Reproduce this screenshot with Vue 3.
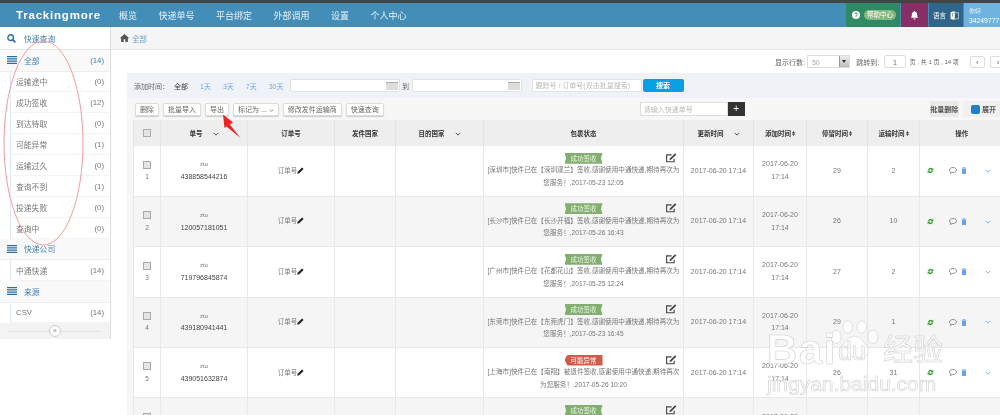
<script setup>
const navItems = ['概览', '快递单号', '平台绑定', '外部调用', '设置', '个人中心']

const statusItems = [
  { name: '运输途中', count: 0 },
  { name: '成功签收', count: 12 },
  { name: '到达待取', count: 0 },
  { name: '可能异常', count: 1 },
  { name: '运输过久', count: 0 },
  { name: '查询不到', count: 1 },
  { name: '投递失败', count: 0 },
  { name: '查询中', count: 0 }
]

const dateLinks = ['1天', '3天', '7天', '30天']

const toolButtons = ['删除', '批量导入', '导出', '标记为 ...', '修改发件运输商', '快速查询']

const columns = [
  { label: '单号', sort: 'down' },
  { label: '订单号' },
  { label: '发件国家' },
  { label: '目的国家', sort: 'down' },
  { label: '包裹状态' },
  { label: '更新时间', sort: 'down' },
  { label: '添加时间', sort: 'both' },
  { label: '停留时间', sort: 'both' },
  { label: '运输时间', sort: 'both' },
  { label: '操作' }
]

const signed = (city, site, date) => `[${city}]快件已在【${site}】签收,感谢使用中通快递,期待再次为您服务！,${date}`

const rows = [
  { id: 1, no: '438858544216', tag: '成功签收', info: signed('深圳市', '深圳观兰', '2017-05-23 12:05'), stay: 29, ship: 2 },
  { id: 2, no: '120057181051', tag: '成功签收', info: signed('长沙市', '长沙开福', '2017-05-26 16:43'), stay: 26, ship: 10 },
  { id: 3, no: '719796845874', tag: '成功签收', info: signed('广州市', '花都花山', '2017-05-25 12:24'), stay: 27, ship: 2 },
  { id: 4, no: '439180941441', tag: '成功签收', info: signed('东莞市', '东莞虎门', '2017-05-23 16:45'), stay: 29, ship: 1 },
  { id: 5, no: '439051632874', tag: '可能异常', danger: true, info: '[上海市]快件已在【南翔】被退件签收,感谢使用中通快递,期待再次为您服务！,2017-05-26 10:20', stay: 26, ship: 31 },
  { id: 6, no: '439051632875', tag: '成功签收', info: signed('上海市', '南翔', '2017-05-26 10:20'), stay: 26, ship: 3 }
]
</script>

<template>
  <div class="page">
    <header class="navbar">
      <span class="brand">Trackingmore</span>
      <nav class="nav-list">
        <span v-for="item in navItems" :key="item">{{ item }}</span>
      </nav>
      <div class="nav-right">
        <div class="nav-box help">
          <svg class="help-icon" viewBox="0 0 16 16"><circle cx="8" cy="8" r="8" fill="#fff"/><path d="M5.6 6.2a2.4 2.4 0 1 1 3.6 2.1c-.8.5-1.2.9-1.2 1.7" fill="none" stroke="#2e8965" stroke-width="2"/><rect x="7" y="11" width="2" height="2" fill="#2e8965"/></svg>
          <span class="help-pill">帮助中心</span>
        </div>
        <div class="nav-box bell">
          <svg viewBox="0 0 16 16" width="9" height="9"><path d="M8 0a1.4 1.4 0 0 1 1.3 1.5C11.700 2.200 12.800 4 12.800 6.500c0 3 .7 4.400 2 5.700H1.200c1.300-1.300 2-2.700 2-5.700C3.200 4 4.300 2.200 6.700 1.500A1.400 1.400 0 0 1 8 0zM6 13.400h4a2 2 0 0 1-4 0z" fill="#fff"/></svg>
        </div>
        <div class="nav-box lang">
          <span>语言</span>
          <svg viewBox="0 0 16 16" width="9" height="9"><path d="M1 2l7-2v16l-7-2z" fill="#fff"/><path d="M8 3h7v11H8z" fill="none" stroke="#fff"/><path d="M10 11l2-5 2 5M3 5h3M4.500 5v5" fill="none" stroke="#2e6589"/></svg>
        </div>
        <div class="nav-box user">
          <span class="user-hi">你好</span>
          <span>34249777</span>
        </div>
      </div>
    </header>

    <div class="body">
      <aside class="sidebar">
        <div class="side-head search-row">
          <svg viewBox="0 0 16 16" width="9" height="9"><circle cx="6.500" cy="6.500" r="5" fill="none" stroke="#2b6ea3" stroke-width="2.600"/><path d="M10.500 10.500L15 15" stroke="#2b6ea3" stroke-width="3"/></svg>
          <span>快速查询</span>
        </div>
        <div class="side-head">
          <svg class="list-icon" viewBox="0 0 10 8"><path d="M0 .6h10M0 2.900h10M0 5.100h10M0 7.400h10" stroke="#2b6ea3" stroke-width="1.200"/></svg>
          <span>全部</span>
          <em>(14)</em>
        </div>
        <div v-for="item in statusItems" :key="item.name" class="side-item">
          <span>{{ item.name }}</span>
          <em>({{ item.count }})</em>
        </div>
        <div class="side-head">
          <svg class="list-icon" viewBox="0 0 10 8"><path d="M0 .6h10M0 2.900h10M0 5.100h10M0 7.400h10" stroke="#2b6ea3" stroke-width="1.200"/></svg>
          <span>快递公司</span>
        </div>
        <div class="side-item">
          <span>中通快递</span>
          <em>(14)</em>
        </div>
        <div class="side-head">
          <svg class="list-icon" viewBox="0 0 10 8"><path d="M0 .6h10M0 2.900h10M0 5.100h10M0 7.400h10" stroke="#2b6ea3" stroke-width="1.200"/></svg>
          <span>来源</span>
        </div>
        <div class="side-item">
          <span>CSV</span>
          <em>(14)</em>
        </div>
        <div class="side-collapse">
          <span class="collapse-btn">«</span>
        </div>
      </aside>

      <main class="main">
        <div class="breadcrumb">
          <svg viewBox="0 0 16 14" width="9" height="8"><path d="M8 0l8 7-1 1-1-.8V14H9.500V9h-3v5H2V7.200L1 8 0 7z" fill="#555"/></svg>
          <span>全部</span>
        </div>

        <div class="pager">
          <span>显示行数:</span>
          <span class="select">50<i class="select-arrow"></i></span>
          <span class="jump">跳转到:</span>
          <span class="page-input">1</span>
          <span class="page-info">页 , 共 1 页 , 14 项</span>
          <span class="page-btn">‹</span>
          <span class="page-btn">›</span>
        </div>

        <section class="panel">
          <div class="filter">
            <span class="filter-label">添加时间：</span>
            <span class="date-all">全部</span>
            <a v-for="link in dateLinks" :key="link" class="date-link">{{ link }}</a>
            <span class="date-input"><i class="cal"></i></span>
            <span class="date-to">到</span>
            <span class="date-input"><i class="cal"></i></span>
            <span class="search-input">跟踪号 / 订单号(双击批量搜索)</span>
            <span class="search-btn">搜索</span>
          </div>

          <div class="toolbar">
            <button v-for="btn in toolButtons" :key="btn" class="tool-btn">
              {{ btn }}
              <svg v-if="btn.startsWith('标记为')" class="btn-caret" viewBox="0 0 8 5"><path d="M1 1l3 3 3-3" fill="none" stroke="#666" stroke-width="1.200"/></svg>
            </button>
            <div class="quick-add">
              <span class="quick-input">请输入快递单号</span>
              <span class="quick-plus">+</span>
            </div>
            <button class="bulk-btn">批量删除</button>
            <button class="bulk-btn expand"><i class="expand-icon"></i>展开</button>
          </div>

          <table class="grid">
            <colgroup>
              <col style="width: 27px" />
              <col style="width: 87px" />
              <col style="width: 87px" />
              <col style="width: 61px" />
              <col style="width: 88px" />
              <col style="width: 200px" />
              <col style="width: 70px" />
              <col style="width: 53px" />
              <col style="width: 61px" />
              <col style="width: 52px" />
              <col style="width: 84px" />
            </colgroup>
            <thead>
              <tr>
                <th><i class="check"></i></th>
                <th v-for="col in columns" :key="col.label">
                  <span>{{ col.label }}</span>
                  <svg v-if="col.sort === 'down'" class="sort-down" viewBox="0 0 8 5"><path d="M1 1l3 3 3-3" fill="none" stroke="#444" stroke-width="1.200"/></svg>
                  <svg v-if="col.sort === 'both'" class="sort-both" viewBox="0 0 4 7"><path d="M2 0l2 3H0zM2 7L0 4h4z" fill="#333"/></svg>
                </th>
              </tr>
            </thead>
            <tbody>
              <tr v-for="row in rows" :key="row.id">
                <td>
                  <i class="check"></i>
                  <div class="row-index">{{ row.id }}</div>
                </td>
                <td>
                  <div class="carrier">zto</div>
                  <div class="track-no">{{ row.no }}</div>
                </td>
                <td>
                  <span class="order-no">订单号</span>
                  <svg class="pencil" viewBox="0 0 16 16"><path d="M11.500 1l3.500 3.500L5 14.500 0.500 15.500 1.500 11z" fill="#222"/></svg>
                </td>
                <td></td>
                <td></td>
                <td class="status-cell">
                  <div class="tag-line">
                    <span class="tag" :class="{ danger: row.danger }">{{ row.tag }}</span>
                    <svg class="edit-icon" viewBox="0 0 18 16"><path d="M14 9v5H2V3h8" fill="none" stroke="#444" stroke-width="1.800"/><path d="M15.500 0.500l2 2L9.500 10.500l-3 1 1-3z" fill="#444"/></svg>
                  </div>
                  <div class="status-text">{{ row.info }}</div>
                </td>
                <td>2017-06-20 17:14</td>
                <td>2017-06-20 17:14</td>
                <td>{{ row.stay }}</td>
                <td>{{ row.ship }}</td>
                <td>
                  <div class="ops">
                    <svg class="op-refresh" viewBox="0 0 16 16"><path d="M2.500 7A5.600 5.600 0 0 1 12.500 4L14.500 2v6H8.500l2-2A3 3 0 0 0 5.500 7zM13.500 9a5.600 5.600 0 0 1-10 3l-2 2V8h6l-2 2a3 3 0 0 0 5 -1z" fill="#2f9e2f"/></svg>
                    <svg class="op-comment" viewBox="0 0 16 14"><path d="M8 1c3.900 0 7 2.200 7 5s-3.100 5-7 5l-1.500-.1L3 13l.6-3C2 9 1 7.600 1 6c0-2.800 3.100-5 7-5z" fill="none" stroke="#666" stroke-width="1.400"/></svg>
                    <svg class="op-trash" viewBox="0 0 12 14"><path d="M1 2.500h10M4.500 2.500V1h3v1.500" fill="none" stroke="#6aa0e6" stroke-width="1.400"/><path d="M2 4h8v10H2z" fill="#6aa0e6"/></svg>
                    <svg class="op-more" viewBox="0 0 8 5"><path d="M1 1l3 3 3-3" fill="none" stroke="#7aa9e8" stroke-width="1.200"/></svg>
                  </div>
                </td>
              </tr>
            </tbody>
          </table>
        </section>
      </main>
    </div>

    <!-- hand drawn marks on top of the screenshot -->
    <svg class="marks" viewBox="0 0 1000 415">
      <ellipse cx="43.500" cy="143" rx="39.500" ry="102" fill="none" stroke="#f49a9a" stroke-width="1" />
      <path d="M223 114.500L233 122.500 229.800 124.500 240.500 138 226.500 126.500 224.500 128z" fill="#ee2222" />
    </svg>

    <div class="watermark">
      <svg class="paw" viewBox="0 0 90 64">
        <g fill="#fff" fill-opacity=".75" stroke="#cfcfcf">
          <ellipse cx="15" cy="26" rx="8" ry="11" />
          <ellipse cx="34" cy="10" rx="8" ry="10" />
          <ellipse cx="57" cy="10" rx="8" ry="10" />
          <ellipse cx="75" cy="26" rx="8" ry="11" />
          <path d="M45 25c10 0 13 8 19 14 7 7 4 21-8 21-4 0-7-2-11-2s-7 2-11 2c-12 0-15-14-8-21 6-6 9-14 19-14z" />
        </g>
      </svg>
      <span class="wm-bai">Bai</span>
      <span class="wm-du">du</span>
      <span class="wm-cn">经验</span>
      <span class="wm-url">jingyan.baidu.com</span>
    </div>
  </div>
</template>

<style>
html,
body {
  margin: 0;
  overflow: hidden;
}
</style>

<style scoped>
.page {
  position: relative;
  width: 1000px;
  height: 415px;
  overflow: hidden;
  display: flex;
  flex-direction: column;
  background: #fff;
  border-top: 3px solid #444;
  box-sizing: border-box;
  font-family: "Liberation Sans", "Noto Sans CJK SC", sans-serif;
  font-size: 7px;
  color: #666;
  filter: blur(0.3px);
}

/* navbar */
.navbar {
  flex: 0 0 24px;
  display: flex;
  align-items: center;
  background: #438eb9;
  color: #fff;
  padding-left: 16px;
}

.brand {
  font-size: 11.5px;
  font-weight: 700;
  letter-spacing: 0.8px;
  margin-right: 18px;
}

.nav-list {
  display: flex;
  gap: 21.5px;
  font-size: 9px;
  color: #e6f0f6;
}

.nav-right {
  margin-left: auto;
  display: flex;
  align-self: stretch;
  gap: 1px;
}

.nav-box {
  display: flex;
  align-items: center;
}

.help {
  width: 54px;
  background: #2e8965;
  padding-left: 6px;
  gap: 4px;
  box-sizing: border-box;
}

.help-icon {
  width: 8px;
  height: 8px;
}

.help-pill {
  background: #87b87f;
  border-radius: 6px;
  padding: 1px 3px;
  font-size: 6.5px;
  line-height: 8px;
}

.bell {
  width: 27px;
  justify-content: center;
  background: #892e65;
}

.lang {
  width: 34px;
  background: #2e6589;
  padding-left: 4px;
  gap: 4px;
  box-sizing: border-box;
  font-size: 6.5px;
}

.user {
  width: 36px;
  background: #6fb3e0;
  padding-left: 5px;
  box-sizing: border-box;
  flex-direction: column;
  align-items: flex-start;
  justify-content: center;
  gap: 2px;
  font-size: 6.8px;
  white-space: nowrap;
}

.user-hi {
  font-size: 6px;
  opacity: 0.85;
}

/* sidebar */
.body {
  flex: 1;
  display: flex;
  min-height: 0;
}

.sidebar {
  flex: 0 0 110px;
  align-self: flex-start;
  background: #fff;
  border-right: 1px solid #ddd;
  font-size: 7.8px;
}

.side-head {
  height: 21.5px;
  display: flex;
  align-items: center;
  gap: 7px;
  padding: 0 6px 0 7px;
  background: #f9f9f9;
  border-bottom: 1px solid #eee;
  box-sizing: border-box;
  color: #3f7fb5;
}

.search-row {
  height: 23px;
  background: #fff;
  gap: 8px;
  border-bottom-color: #e5e5e5;
}

.list-icon {
  width: 10px;
  height: 8px;
  flex-shrink: 0;
}

.side-head em {
  margin-left: auto;
  font-style: normal;
}

.side-item {
  height: 20.9px;
  margin-left: 10px;
  padding: 1px 6px 0 5px;
  display: flex;
  align-items: center;
  justify-content: space-between;
  border-left: 1px solid #dfe9f5;
  border-bottom: 1px solid #f4f4f4;
  box-sizing: border-box;
  color: #777;
}

.side-item em {
  font-style: normal;
}

.side-collapse {
  height: 16px;
  display: flex;
  align-items: center;
  justify-content: center;
  background: #f3f3f3;
  background-image: linear-gradient(#e2e2e2, #e2e2e2);
  background-size: 92px 1px;
  background-position: center;
  background-repeat: no-repeat;
}

.collapse-btn {
  width: 10px;
  height: 10px;
  line-height: 9px;
  text-align: center;
  border: 1px solid #ccc;
  border-radius: 50%;
  background: #fff;
  color: #888;
  font-size: 7px;
}

/* main */
.main {
  width: 889px;
  flex-shrink: 0;
}

.breadcrumb {
  height: 23px;
  display: flex;
  align-items: center;
  gap: 3px;
  padding-left: 9px;
  background: #f5f5f5;
  border-bottom: 1px solid #e5e5e5;
  box-sizing: border-box;
  font-size: 7.5px;
  color: #6d9ec4;
}

.pager {
  height: 23px;
  width: 900px;
  display: flex;
  align-items: center;
  padding-left: 664px;
  box-sizing: border-box;
  font-size: 7px;
  color: #666;
  white-space: nowrap;
}

.select {
  width: 44px;
  height: 13px;
  margin-left: 2px;
  padding-left: 4px;
  position: relative;
  line-height: 13px;
  border: 1px solid #ddd;
  box-sizing: border-box;
  color: #aaa;
}

.select-arrow {
  position: absolute;
  right: 0;
  top: 0;
  width: 9px;
  height: 11px;
  background: linear-gradient(#eee, #bbb);
  border-left: 1px solid #999;
}

.select-arrow::after {
  content: "";
  position: absolute;
  left: 2px;
  top: 4px;
  border: 2px solid transparent;
  border-top: 3px solid #333;
}

.jump {
  margin-left: 6px;
}

.page-input {
  width: 22px;
  height: 13px;
  margin-left: 5px;
  line-height: 13px;
  text-align: center;
  border: 1px solid #ddd;
  border-radius: 2px;
  box-sizing: border-box;
}

.page-info {
  margin-left: 4px;
  width: 61px;
  font-size: 6px;
}

.page-btn {
  width: 16px;
  height: 12px;
  margin-right: 5px;
  line-height: 11px;
  text-align: center;
  border: 1px solid #ddd;
  border-radius: 2px;
  box-sizing: border-box;
  font-size: 8px;
}

.panel {
  margin-left: 16px;
  width: 880px;
  padding-bottom: 40px;
  background: #f5f6f8;
}

.filter {
  height: 25px;
  display: flex;
  align-items: center;
  padding-left: 7px;
  background: #eff3f8;
  font-size: 7px;
  white-space: nowrap;
}

.date-all {
  margin-left: 5px;
  color: #333;
}

.date-link {
  margin-left: 12px;
  color: #6fa8e8;
}

.date-link:last-of-type {
  margin-right: 6px;
}

.date-input {
  width: 110px;
  height: 13px;
  position: relative;
  background: #fff;
  border: 1px solid #e2e2e2;
  border-radius: 2px;
  box-sizing: border-box;
}

.cal {
  position: absolute;
  right: 1px;
  top: 2px;
  width: 12px;
  height: 7px;
  background: #ddd;
  border-top: 1px solid #aaa;
}

.date-to {
  width: 12px;
  text-align: center;
}

.search-input {
  width: 110px;
  height: 13px;
  margin-left: 10px;
  line-height: 12px;
  padding-left: 3px;
  overflow: hidden;
  background: #fff;
  border: 1px solid #e2e2e2;
  border-radius: 2px;
  box-sizing: border-box;
  color: #bbb;
}

.search-btn {
  width: 41px;
  height: 13px;
  margin-left: 1px;
  line-height: 13px;
  text-align: center;
  background: #0a9fe0;
  border-radius: 2px;
  color: #fff;
  font-weight: 700;
}

.toolbar {
  height: 22px;
  display: flex;
  align-items: center;
  gap: 4px;
  padding-left: 8px;
  background: #f7f7f7;
}

.tool-btn {
  height: 13px;
  padding: 0 4px;
  background: #fff;
  border: 1px solid #ddd;
  border-radius: 2px;
  box-shadow: 0 1px 1px #ccc;
  font: inherit;
  color: #666;
  white-space: nowrap;
}

.btn-caret {
  width: 5px;
  height: 3px;
  vertical-align: middle;
}

.quick-add {
  display: flex;
  margin-left: 252px;
  margin-right: 181px;
}

.quick-input {
  width: 88px;
  height: 14px;
  line-height: 13px;
  padding-left: 3px;
  background: #fff;
  border: 1px solid #ddd;
  box-sizing: border-box;
  color: #bbb;
}

.quick-plus {
  width: 17px;
  height: 14px;
  line-height: 13px;
  text-align: center;
  background: #333;
  color: #fff;
  font-size: 10px;
}

.bulk-btn {
  height: 16px;
  width: 34px;
  padding: 0;
  background: #e9e9e9;
  border: 0;
  border-radius: 2px;
  font: inherit;
  font-weight: 700;
  color: #555;
  white-space: nowrap;
}

.expand {
  width: 50px;
  display: flex;
  align-items: center;
  justify-content: flex-start;
  gap: 2px;
  padding-left: 8px;
  background: #f0f0f0;
}

.expand-icon {
  width: 9px;
  height: 9px;
  background: #1f7fc9;
  border-radius: 2px;
}

/* table */
.grid {
  margin-left: 6px;
  width: 870px;
  table-layout: fixed;
  border-collapse: collapse;
  background: #fff;
}

.grid th {
  height: 26px;
  padding: 0;
  background: #eee;
  border-left: 1px solid #e4e4e4;
  font-size: 6.5px;
  color: #333;
  white-space: nowrap;
}

.grid td {
  height: 50.400px;
  padding: 0;
  box-sizing: border-box;
  text-align: center;
  line-height: 12.500px;
  border-left: 1px solid #e8e8e8;
  border-bottom: 1px solid #e8e8e8;
  font-size: 7px;
  color: #777;
}

.grid tbody tr:nth-child(even) td {
  background: #f5f5f5;
}

.sort-down {
  width: 6px;
  height: 4px;
  margin-left: 10px;
}

.sort-both {
  width: 3px;
  height: 5px;
  margin-left: 1px;
}

.check {
  display: inline-block;
  width: 6px;
  height: 6px;
  background: #e4e4e4;
  border: 1px solid #aaa;
  vertical-align: middle;
}

.row-index {
  font-size: 6.500px;
}

.carrier {
  font-size: 6px;
}

.track-no {
  color: #444;
}

.order-no {
  font-size: 6.500px;
}

.pencil {
  width: 7px;
  height: 7px;
  vertical-align: -1px;
}

.grid td.status-cell {
  padding: 0 3px;
  font-size: 6.600px;
}

.tag-line {
  position: relative;
  height: 11.500px;
  line-height: 11px;
}

.tag {
  display: inline-block;
  width: 38px;
  height: 11px;
  line-height: 11px;
  background: #82af6f;
  color: #eaf3e5;
  font-size: 6.500px;
  clip-path: polygon(0 0, 100% 0, 96% 50%, 100% 100%, 0 100%, 4% 50%);
}

.tag.danger {
  background: #d15b47;
  color: #fff;
  clip-path: polygon(8% 0, 100% 0, 100% 100%, 8% 100%, 0 50%);
}

.edit-icon {
  position: absolute;
  right: 3px;
  top: 0;
  width: 12px;
  height: 10px;
}

.ops {
  display: flex;
  align-items: center;
  padding-left: 7px;
}

.op-refresh {
  width: 7px;
  height: 7px;
}

.op-comment {
  width: 8px;
  height: 7px;
  margin-left: 15px;
}

.op-trash {
  width: 6px;
  height: 7px;
  margin-left: 4px;
}

.op-more {
  width: 6px;
  height: 4px;
  margin-left: 18px;
}

/* overlays */
.marks {
  position: absolute;
  left: 0;
  top: -3px;
  width: 1000px;
  height: 415px;
  pointer-events: none;
}

.watermark {
  position: absolute;
  left: 767px;
  top: 302px;
  width: 180px;
  height: 92px;
  pointer-events: none;
  color: rgba(255, 255, 255, 0.8);
  -webkit-text-stroke: 0.6px #cfcfcf;
  font-family: "Liberation Sans", "Noto Sans CJK SC", sans-serif;
}

.paw {
  position: absolute;
  left: 60px;
  top: 6px;
  width: 55px;
  height: 59px;
}

.wm-bai {
  position: absolute;
  left: 0;
  top: 22px;
  font-size: 42px;
  line-height: 46px;
  letter-spacing: 1.5px;
  font-weight: 700;
}

.wm-du {
  position: absolute;
  left: 71px;
  top: 32px;
  font-size: 25px;
  line-height: 28px;
}

.wm-cn {
  position: absolute;
  left: 116px;
  top: 27px;
  font-size: 30px;
  line-height: 36px;
  white-space: nowrap;
}

.wm-url {
  position: absolute;
  left: 0;
  top: 67px;
  font-size: 21px;
  line-height: 24px;
  white-space: nowrap;
}
</style>
